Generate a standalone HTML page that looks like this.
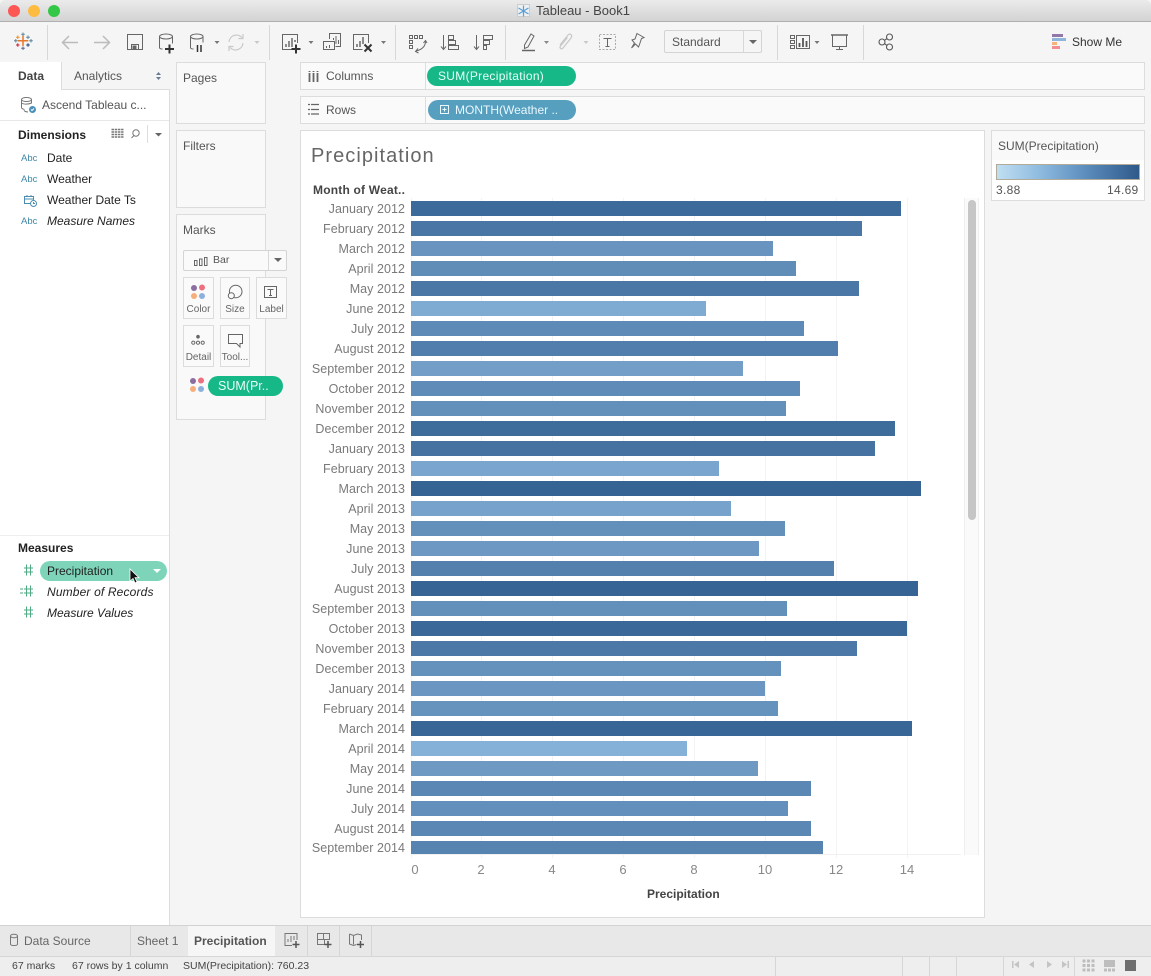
<!DOCTYPE html>
<html><head><meta charset="utf-8"><title>Tableau - Book1</title>
<style>
html,body{margin:0;padding:0;width:1151px;height:976px;overflow:hidden;background:#f5f5f5}
body{position:relative;font-family:"Liberation Sans",sans-serif;font-size:12px;color:#333}
.a,.t,.b,.l{position:absolute}
.t{white-space:nowrap;line-height:16px}
.card{position:absolute;box-sizing:border-box;border:1px solid #dcdcdc;background:#f9f9f9}
.b{left:411px;height:15px}
.l{left:295px;width:110px;text-align:right;color:#7a7a7a;font-size:12.5px;letter-spacing:.05px;line-height:16px;white-space:nowrap}
.g{position:absolute;top:198px;width:1px;height:660px;background:#f3f3f3}
.x{position:absolute;top:862px;width:30px;text-align:center;color:#888;font-size:13px;line-height:16px}
.s{position:absolute;top:957px;width:1px;height:19px;background:#d6d6d6}
.mk{position:absolute;box-sizing:border-box;width:31px;height:42px;border:1px solid #dcdcdc;background:#fafafa;color:#666;font-size:10px;text-align:center;padding-top:26px;line-height:12px;white-space:nowrap}
svg{position:absolute;overflow:visible}
</style></head><body>

<!-- Title bar -->
<div class="a" style="left:0;top:0;width:1151px;height:22px;background:linear-gradient(#ebebeb,#d3d3d3);border-bottom:1px solid #b0b0b0;box-sizing:border-box;border-radius:5px 5px 0 0"></div>
<div class="a" style="left:8px;top:5px;width:12px;height:12px;border-radius:50%;background:#fc5753"></div>
<div class="a" style="left:28px;top:5px;width:12px;height:12px;border-radius:50%;background:#fdbc40"></div>
<div class="a" style="left:48px;top:5px;width:12px;height:12px;border-radius:50%;background:#33c748"></div>
<div class="a" style="left:517px;top:4px;width:13px;height:13px;background:#eef1f4;border:1px solid #ccc;box-sizing:border-box"></div>
<svg style="left:0;top:0" width="1151" height="22"><g stroke="#5a9fd4" stroke-width="1.2"><path d="M523.500 5.500v11M518.500 8l10 6M518.500 14l10-6"/></g></svg>
<div class="t" style="left:536px;top:3px;font-size:13px;color:#444">Tableau - Book1</div>

<!-- Toolbar icons -->
<svg style="left:0;top:0" width="1151" height="62" viewBox="0 0 1151 62" fill="none">
<!-- logo -->
<g stroke-width="1">
<path d="M23 35.500v10.500M17.800 40.800h10.500" stroke="#e8762d" stroke-width="1.500"/>
<path d="M23 32.500v3.500M21.200 34.200h3.600" stroke="#5b879b"/>
<path d="M23 46.500v3.500M21.200 48.200h3.600" stroke="#5b6591"/>
<path d="M15.800 39v3.500M14 40.800h3.600M31 39v3.500M29.200 40.800h3.600" stroke="#5b879b"/>
<path d="M17.800 35.500v3.500M16 37.200h3.600" stroke="#eb912b"/>
<path d="M28 35.500v3.500M26.200 37.200h3.600" stroke="#5b879b"/>
<path d="M17.800 43.200v3.500M16 45h3.600" stroke="#c72035"/>
<path d="M28 43.200v3.500M26.200 45h3.600" stroke="#1f447a"/>
</g>
<!-- separators -->
<g stroke="#d8d8d8"><path d="M47.500 25v35M269.500 25v35M395.500 25v35M505.500 25v35M777.500 25v35M863.500 25v35"/></g>
<!-- back / forward -->
<g stroke="#bcbcbc" stroke-width="1.500"><path d="M78 42.500H63M69 36l-6.500 6.500L69 49M94 42.500h15M103 36l6.500 6.500L103 49"/></g>
<!-- save -->
<g stroke="#666"><path d="M127.500 34.500h15v15h-15zM131.500 49.500v-5h7v5"/><path d="M133 46h3v3.500h-3z" fill="#666"/></g>
<!-- data add -->
<g stroke="#666"><path d="M159.500 36.500v11c0 1 1 1.500 3 1.500M172.500 36.500v7"/><ellipse cx="166" cy="36.500" rx="6.500" ry="2.500"/></g>
<path d="M165 49h9M169.500 44.500v9" stroke="#333" stroke-width="2"/>
<!-- data pause -->
<g stroke="#666"><path d="M190.500 36.500v11c0 1 1 1.500 3 1.500M203 36.500v6"/><ellipse cx="196.800" cy="36.500" rx="6.300" ry="2.500"/></g>
<path d="M197.500 45v7M201 45v7" stroke="#333" stroke-width="1.500"/>
<path d="M214.500 41h5l-2.500 3z" fill="#777"/>
<!-- refresh -->
<g stroke="#c8c8c8" stroke-width="1.200"><path d="M229 42a7.500 7.500 0 0 1 13-4.500M243 43a7.500 7.500 0 0 1-13 4.500"/><path d="M243 34v4.500h-4.500M229 51v-4.500h4.500"/></g>
<path d="M254.500 41h5l-2.500 3z" fill="#c8c8c8"/>
<!-- new sheet -->
<path d="M297.500 43v-8.500h-15v15h9" stroke="#666"/>
<path d="M286 47v-3M289 47v-6M292 47v-9M295 42v-2" stroke="#555" stroke-width="1.300"/>
<path d="M291.500 49h9M296 44.500v9" stroke="#333" stroke-width="2"/>
<path d="M308.500 41h5l-2.500 3z" fill="#777"/>
<!-- duplicate -->
<g stroke="#666"><path d="M329.500 39v-5.500h11v13h-5M323.500 41.500h11v8h-11z"/></g>
<path d="M333.500 40v-2M336 44v-8M338.500 44v-4M326.500 48v-2M329.500 48v-3" stroke="#666"/>
<!-- clear -->
<path d="M368.500 43v-8.500h-15v15h9" stroke="#666"/>
<path d="M357 47v-3M360 47v-6M363 44v-7" stroke="#555" stroke-width="1.300"/>
<path d="M364.500 44.500l7 7M371.500 44.500l-7 7" stroke="#333" stroke-width="2"/>
<path d="M381 41h5l-2.500 3z" fill="#777"/>
<!-- swap -->
<g stroke="#666"><path d="M409.500 35.500h3v3h-3zM414.500 35.500h3v3h-3zM419.500 35.500h3v3h-3zM409.500 40.500h3v3h-3zM409.500 45.500h3v3h-3z"/><path d="M425.500 41c0 5-3 8.500-9.500 10M418 48.500l-2.500 3 3 1.500M423.500 43l2-2.500 1.500 2.500"/></g>
<!-- sort asc/desc -->
<g stroke="#666">
<path d="M443.500 35v14M441 46.500l2.500 3 2.500-3"/><path d="M448.500 35.500h5v4h-5zM448.500 40.500h7v4h-7zM448.500 45.500h10v4h-10z"/>
<path d="M476.500 35v14M474 46.500l2.500 3 2.500-3"/><path d="M483.500 35.500h9v4h-9zM483.500 40.500h6v4h-6zM483.500 45.500h3v4h-3z"/>
</g>
<!-- highlight -->
<path d="M524.500 45l6.500-11 3 2-6 11-3.500 1.500z" stroke="#666"/>
<path d="M522 50.500h13" stroke="#666" stroke-width="1.500"/>
<path d="M544 41h5l-2.500 3z" fill="#888"/>
<!-- clip -->
<path d="M560 45l8-10c2-2 5 0 3 3l-8 10c-1.500 2-4 0-2.500-2l7-8.500" stroke="#c8c8c8" stroke-width="1.200"/>
<path d="M583.500 41h5l-2.500 3z" fill="#c8c8c8"/>
<!-- T -->
<path d="M599.500 34.500h16v15h-16z" stroke="#aaa" stroke-dasharray="2 1.500"/>
<path d="M603.500 38.500h8M607.500 38.500v8M605.500 46.500h4" stroke="#666"/>
<!-- pin -->
<path d="M637 33.500l7 4-2.500 1-2 6-1 2.500-3-3-4 4 3-5-2.500-3 3-1 2-5.500z" stroke="#666"/>
<!-- show cards -->
<g stroke="#666"><path d="M790.500 35.500h4v3h-4zM790.500 40.500h4v3h-4zM790.500 45.500h4v3h-4zM796.500 35.500h13v13h-13z"/></g>
<path d="M799.500 47v-4M803 47v-9M806.500 47v-6" stroke="#555" stroke-width="1.800"/>
<path d="M814.500 41h5l-2.500 3z" fill="#777"/>
<!-- presentation -->
<g stroke="#666"><path d="M831 35h17" stroke-width="1.500"/><path d="M832.500 35v11.500h14V35M839.500 46.500v3M836 49.500h7"/></g>
<!-- share -->
<g stroke="#555" stroke-width="1.100"><circle cx="882" cy="42" r="3"/><circle cx="889.500" cy="37" r="3"/><circle cx="889.500" cy="47" r="3"/><path d="M884.500 40.300l2.500-1.700M884.500 43.700l2.500 1.700"/></g>
<!-- show me -->
<path d="M1052 34h11v3h-11z" fill="#9178a8"/><path d="M1052 38h14v3h-14z" fill="#8fb5dc"/><path d="M1052 42h5v3h-5z" fill="#f6b27a"/><path d="M1052 46h8v3h-8z" fill="#f28e8e"/>
</svg>
<div class="a" style="left:664px;top:30px;width:98px;height:23px;box-sizing:border-box;border:1px solid #d4d4d4;border-radius:2px;background:#f5f5f5"></div>
<div class="a" style="left:743px;top:31px;width:1px;height:21px;background:#d8d8d8"></div>
<div class="t" style="left:672px;top:34px;color:#555">Standard</div>
<div class="a" style="left:749px;top:40px;width:0;height:0;border:4px solid transparent;border-top:4px solid #666;border-bottom:0"></div>
<div class="t" style="left:1072px;top:34px;color:#333">Show Me</div>

<!-- Left panel -->
<div class="a" style="left:0;top:62px;width:169px;height:863px;background:#fff;border-right:1px solid #ddd"></div>
<div class="a" style="left:61px;top:62px;width:109px;height:28px;background:#f5f5f5;border-left:1px solid #ddd;border-bottom:1px solid #ddd;box-sizing:border-box"></div>
<div class="a" style="left:0;top:120px;width:169px;height:1px;background:#e8e8e8"></div>
<div class="t" style="left:18px;top:68px;font-weight:bold;color:#444">Data</div>
<div class="t" style="left:74px;top:68px;color:#555">Analytics</div>
<svg style="left:155px;top:71px" width="8" height="10"><path d="M1 4l2.500-3L6 4zM1 6l2.500 3L6 6z" fill="#6a7a90"/></svg>
<svg style="left:20px;top:97px" width="18" height="18" fill="none" stroke="#777"><ellipse cx="6.500" cy="2.500" rx="5" ry="2"/><path d="M1.500 2.500v8c0 1 1 1.500 3 2M11.500 2.500v4M1.500 6c2 1.500 7 1.500 10 0M4 13.500c1 1 2 1.500 4 1.500"/><circle cx="12.500" cy="12.500" r="3.500" fill="#4a90b8" stroke="none"/><path d="M11 12.500l1 1 2-2" stroke="#fff"/></svg>
<div class="t" style="left:42px;top:97px;color:#555">Ascend Tableau c...</div>

<div class="t" style="left:18px;top:127px;font-weight:bold;color:#222">Dimensions</div>
<svg style="left:111px;top:128px" width="55" height="14" fill="none"><path d="M0.500 1.500h12M.5 4h12M.5 6.500h12M.5 9h12" stroke="#777" stroke-dasharray="2.500 .7" stroke-width="1.500"/><circle cx="25" cy="5" r="3.200" stroke="#777"/><path d="M23 7.500l-2.500 2.500" stroke="#777"/><path d="M36.500 -3v18" stroke="#ddd"/><path d="M44 5h7l-3.500 3.500z" fill="#666"/></svg>

<div class="t" style="left:21px;top:151px;font-size:9.500px;color:#3f87a8">Abc</div>
<div class="t" style="left:47px;top:150px;color:#222">Date</div>
<div class="t" style="left:21px;top:172px;font-size:9.500px;color:#3f87a8">Abc</div>
<div class="t" style="left:47px;top:171px;color:#222">Weather</div>
<svg style="left:24px;top:194px" width="14" height="14" fill="none" stroke="#4a8fb0"><path d="M.5 2.500h9v7h-9zM.5 5h9M3 1v2M7 1v2"/><circle cx="9.500" cy="9.500" r="3" fill="#fff"/><path d="M9.500 8v1.500h1.500"/></svg>
<div class="t" style="left:47px;top:192px;color:#222">Weather Date Ts</div>
<div class="t" style="left:21px;top:214px;font-size:9.500px;color:#3f87a8">Abc</div>
<div class="t" style="left:47px;top:213px;font-style:italic;color:#222">Measure Names</div>

<div class="a" style="left:0;top:535px;width:169px;height:1px;background:#eee"></div>
<div class="t" style="left:18px;top:540px;font-weight:bold;color:#222">Measures</div>
<div class="a" style="left:40px;top:561px;width:127px;height:20px;border-radius:10px;background:#7dd4b8"></div>
<div class="t" style="left:47px;top:563px;color:#222">Precipitation</div>
<div class="a" style="left:153px;top:569px;width:0;height:0;border:4px solid transparent;border-top:4px solid #fff;border-bottom:0"></div>
<svg style="left:20px;top:563px" width="16" height="60" fill="none" stroke="#4fa982"><path d="M6.500 1.500v11M10.500 1.500v11M4 5h9M4 9h9"/><path d="M6.500 22.500v11M10.500 22.500v11M4 26h9M4 30h9M0 26h3M0 30h3"/><path d="M6.500 43.500v11M10.500 43.500v11M4 47h9M4 51h9"/></svg>
<div class="t" style="left:47px;top:584px;font-style:italic;color:#222;letter-spacing:.15px">Number of Records</div>
<div class="t" style="left:47px;top:605px;font-style:italic;color:#222">Measure Values</div>
<svg style="left:129px;top:568px" width="12" height="17"><path d="M1 1v12l3-2.500 2 4.500 2-1-2-4.300h4z" fill="#111" stroke="#fff" stroke-width=".8"/></svg>

<!-- Cards -->
<div class="card" style="left:176px;top:62px;width:90px;height:62px"></div>
<div class="t" style="left:183px;top:70px;color:#555">Pages</div>
<div class="card" style="left:176px;top:130px;width:90px;height:78px"></div>
<div class="t" style="left:183px;top:138px;color:#555">Filters</div>
<div class="card" style="left:176px;top:214px;width:90px;height:206px"></div>
<div class="t" style="left:183px;top:222px;color:#555">Marks</div>
<div class="a" style="left:183px;top:250px;width:104px;height:21px;box-sizing:border-box;border:1px solid #d4d4d4;background:#fafafa;border-radius:2px"></div>
<div class="a" style="left:268px;top:251px;width:1px;height:19px;background:#d8d8d8"></div>
<svg style="left:194px;top:257px" width="14" height="9" fill="none" stroke="#666"><path d="M.5 3.500h2.500v5H.5zM5.500 2h2.500v6.500H5.500zM10.500 .5h2.500v8h-2.500z"/></svg>
<div class="t" style="left:213px;top:252px;font-size:10.500px;color:#555">Bar</div>
<div class="a" style="left:274px;top:258px;width:0;height:0;border:4px solid transparent;border-top:4px solid #666;border-bottom:0"></div>

<div class="mk" style="left:183px;top:277px">Color</div>
<div class="mk" style="left:220px;top:277px;width:30px">Size</div>
<div class="mk" style="left:256px;top:277px">Label</div>
<div class="mk" style="left:183px;top:325px">Detail</div>
<div class="mk" style="left:220px;top:325px;width:30px">Tool...</div>
<svg style="left:183px;top:277px" width="100" height="120" fill="none">
<circle cx="11" cy="11" r="3" fill="#8a6fa0"/><circle cx="19" cy="10.500" r="3" fill="#ee7080"/><circle cx="11" cy="19" r="3" fill="#f5ae7c"/><circle cx="19" cy="19" r="3" fill="#8cb0dc"/>
<circle cx="52.700" cy="14.500" r="6.300" stroke="#666"/><circle cx="48.300" cy="18.700" r="3" stroke="#666" fill="#fafafa"/>
<path d="M81.500 9.500h12v11h-12z" stroke="#666"/><path d="M84.500 12.500h6M87.500 12.500v6M86 18.500h3" stroke="#666"/>
<circle cx="15" cy="59.700" r="1.800" fill="#666"/><circle cx="10.300" cy="65.700" r="1.600" stroke="#666"/><circle cx="15" cy="65.700" r="1.600" stroke="#666"/><circle cx="19.700" cy="65.700" r="1.600" stroke="#666"/>
<path d="M45.500 57.500h14v9h-2.500v3.500l-3.500-3.500h-8z" stroke="#666"/>
</svg>
<svg style="left:189px;top:377px" width="16" height="16"><circle cx="4" cy="4" r="3" fill="#8a6fa0"/><circle cx="12" cy="3.500" r="3" fill="#ee7080"/><circle cx="4" cy="12" r="3" fill="#f5ae7c"/><circle cx="12" cy="12" r="3" fill="#8cb0dc"/></svg>
<div class="a" style="left:208px;top:376px;width:75px;height:20px;border-radius:10px;background:#17b887"></div>
<div class="t" style="left:218px;top:378px;color:#e9fff8;font-size:12.500px">SUM(Pr..</div>

<!-- Shelves -->
<div class="card" style="left:300px;top:62px;width:845px;height:28px;background:#fafafa"></div>
<div class="card" style="left:300px;top:96px;width:845px;height:28px;background:#fafafa"></div>
<div class="a" style="left:425px;top:63px;width:1px;height:26px;background:#ddd"></div>
<div class="a" style="left:425px;top:97px;width:1px;height:26px;background:#ddd"></div>
<svg style="left:308px;top:70px" width="12" height="46"><path d="M1.500 3v9M5.500 3v9M9.500 3v9" stroke="#666" stroke-width="1.800"/><path d="M1.500 1v1M5.500 1v1M9.500 1v1" stroke="#666" stroke-width="1.800"/><path d="M0 34.500h2M3 34.500h8M0 39.500h2M3 39.500h8M0 44h2M3 44h8" stroke="#666" stroke-width="1.300"/></svg>
<div class="t" style="left:326px;top:68px;color:#555">Columns</div>
<div class="t" style="left:326px;top:102px;color:#555">Rows</div>
<div class="a" style="left:427px;top:66px;width:149px;height:20px;border-radius:10px;background:#17b887"></div>
<div class="t" style="left:438px;top:68px;color:#e9fff8;letter-spacing:.3px">SUM(Precipitation)</div>
<div class="a" style="left:428px;top:100px;width:148px;height:20px;border-radius:10px;background:#569fbe"></div>
<svg style="left:440px;top:105px" width="10" height="10" fill="none" stroke="#e9f8ff"><path d="M.5.500h8v8h-8zM2.500 4.500h4M4.500 2.500v4"/></svg>
<div class="t" style="left:455px;top:102px;color:#e9f8ff">MONTH(Weather ..</div>

<!-- Chart card -->
<div class="card" style="left:300px;top:130px;width:685px;height:788px;background:#fff"></div>
<div class="t" style="left:311px;top:144px;font-size:20px;line-height:24px;color:#666;letter-spacing:1.05px">Precipitation</div>
<div class="t" style="left:313px;top:182px;font-weight:bold;color:#444;letter-spacing:.2px">Month of Weat..</div>

<div class="g" style="left:411px"></div><div class="g" style="left:481px"></div><div class="g" style="left:552px"></div><div class="g" style="left:623px"></div><div class="g" style="left:694px"></div><div class="g" style="left:765px"></div><div class="g" style="left:836px"></div><div class="g" style="left:907px"></div>
<div class="a" style="left:411px;top:854px;width:550px;height:1px;background:#f0f0f0"></div>
<div class="a" style="left:964px;top:198px;width:15px;height:657px;background:#fafafa;border-left:1px solid #eee;border-right:1px solid #eee;box-sizing:border-box"></div>
<div class="a" style="left:968px;top:200px;width:8px;height:320px;border-radius:4px;background:#c6c6c6"></div>

<div class="b" style="top:201px;width:490px;background:#3c6a9a"></div><div class="l" style="top:201px">January 2012</div>
<div class="b" style="top:221px;width:451px;background:#4976a5"></div><div class="l" style="top:221px">February 2012</div>
<div class="b" style="top:241px;width:362px;background:#6894bf"></div><div class="l" style="top:241px">March 2012</div>
<div class="b" style="top:261px;width:385px;background:#608cb8"></div><div class="l" style="top:261px">April 2012</div>
<div class="b" style="top:281px;width:448px;background:#4a77a6"></div><div class="l" style="top:281px">May 2012</div>
<div class="b" style="top:301px;width:295px;background:#7faad2"></div><div class="l" style="top:301px">June 2012</div>
<div class="b" style="top:321px;width:393px;background:#5d8ab6"></div><div class="l" style="top:321px">July 2012</div>
<div class="b" style="top:341px;width:427px;background:#517eac"></div><div class="l" style="top:341px">August 2012</div>
<div class="b" style="top:361px;width:332px;background:#729ec8"></div><div class="l" style="top:361px">September 2012</div>
<div class="b" style="top:381px;width:389px;background:#5e8bb7"></div><div class="l" style="top:381px">October 2012</div>
<div class="b" style="top:401px;width:375px;background:#638fbb"></div><div class="l" style="top:401px">November 2012</div>
<div class="b" style="top:421px;width:484px;background:#3e6c9b"></div><div class="l" style="top:421px">December 2012</div>
<div class="b" style="top:441px;width:464px;background:#4572a1"></div><div class="l" style="top:441px">January 2013</div>
<div class="b" style="top:461px;width:308px;background:#7aa5cf"></div><div class="l" style="top:461px">February 2013</div>
<div class="b" style="top:481px;width:510px;background:#356394"></div><div class="l" style="top:481px">March 2013</div>
<div class="b" style="top:501px;width:320px;background:#76a2cb"></div><div class="l" style="top:501px">April 2013</div>
<div class="b" style="top:521px;width:374px;background:#6390bb"></div><div class="l" style="top:521px">May 2013</div>
<div class="b" style="top:541px;width:348px;background:#6c98c3"></div><div class="l" style="top:541px">June 2013</div>
<div class="b" style="top:561px;width:423px;background:#5380ad"></div><div class="l" style="top:561px">July 2013</div>
<div class="b" style="top:581px;width:507px;background:#366495"></div><div class="l" style="top:581px">August 2013</div>
<div class="b" style="top:601px;width:376px;background:#638fbb"></div><div class="l" style="top:601px">September 2013</div>
<div class="b" style="top:621px;width:496px;background:#3a6898"></div><div class="l" style="top:621px">October 2013</div>
<div class="b" style="top:641px;width:446px;background:#4b78a7"></div><div class="l" style="top:641px">November 2013</div>
<div class="b" style="top:661px;width:370px;background:#6591bd"></div><div class="l" style="top:661px">December 2013</div>
<div class="b" style="top:681px;width:354px;background:#6a96c1"></div><div class="l" style="top:681px">January 2014</div>
<div class="b" style="top:701px;width:367px;background:#6692be"></div><div class="l" style="top:701px">February 2014</div>
<div class="b" style="top:721px;width:501px;background:#386697"></div><div class="l" style="top:721px">March 2014</div>
<div class="b" style="top:741px;width:276px;background:#85b0d8"></div><div class="l" style="top:741px">April 2014</div>
<div class="b" style="top:761px;width:347px;background:#6d99c3"></div><div class="l" style="top:761px">May 2014</div>
<div class="b" style="top:781px;width:400px;background:#5b87b4"></div><div class="l" style="top:781px">June 2014</div>
<div class="b" style="top:801px;width:377px;background:#628fbb"></div><div class="l" style="top:801px">July 2014</div>
<div class="b" style="top:821px;width:400px;background:#5b87b4"></div><div class="l" style="top:821px">August 2014</div>
<div class="b" style="top:841px;width:412px;height:13px;background:#5783b0"></div><div class="l" style="top:840px">September 2014</div>

<div class="x" style="left:400px">0</div><div class="x" style="left:466px">2</div><div class="x" style="left:537px">4</div><div class="x" style="left:608px">6</div><div class="x" style="left:679px">8</div><div class="x" style="left:750px">10</div><div class="x" style="left:821px">12</div><div class="x" style="left:892px">14</div>
<div class="t" style="left:647px;top:886px;font-weight:bold;color:#444">Precipitation</div>

<!-- Legend -->
<div class="card" style="left:991px;top:130px;width:154px;height:71px;background:#fff"></div>
<div class="a" style="left:992px;top:131px;width:152px;height:29px;background:#f9f9f9"></div>
<div class="t" style="left:998px;top:138px;color:#555">SUM(Precipitation)</div>
<div class="a" style="left:996px;top:164px;width:144px;height:16px;box-sizing:border-box;border:1px solid #b2ab98;background:linear-gradient(90deg,#c0dff2,#8fbbdf 30%,#5f90c0 60%,#2f5a8a)"></div>
<div class="t" style="left:996px;top:182px;color:#555;letter-spacing:.3px">3.88</div>
<div class="t" style="left:1107px;top:182px;color:#555;letter-spacing:.3px">14.69</div>

<!-- Tabs -->
<div class="a" style="left:0;top:925px;width:1151px;height:32px;background:#e8e8e8;border-top:1px solid #d2d2d2;border-bottom:1px solid #d6d6d6;box-sizing:border-box"></div>
<div class="a" style="left:130px;top:926px;width:1px;height:30px;background:#d6d6d6"></div>
<div class="a" style="left:188px;top:926px;width:87px;height:30px;background:#f6f6f6"></div>
<div class="a" style="left:307px;top:926px;width:1px;height:30px;background:#d6d6d6"></div>
<div class="a" style="left:339px;top:926px;width:1px;height:30px;background:#d6d6d6"></div>
<div class="a" style="left:371px;top:926px;width:1px;height:30px;background:#d6d6d6"></div>
<svg style="left:0;top:926px" width="380" height="30" fill="none">
<path d="M10.500 10v8c0 1 1.500 1.500 3.500 1.500s3.500-.5 3.500-1.500v-8" stroke="#777"/><ellipse cx="14" cy="10" rx="3.500" ry="1.800" stroke="#777"/>
<path d="M297 14V7.500h-12v12h7" stroke="#777"/><path d="M288 16v-3M291 16v-6M294 14v-4" stroke="#777"/><path d="M292.500 18.500h7M296 15v7" stroke="#555" stroke-width="1.500"/>
<path d="M317.500 7.500h12v6h-5v5h-7zM317.500 13.500h7M323.500 7.500v6" stroke="#777"/><path d="M324.500 18.500h7M328 15v7" stroke="#555" stroke-width="1.500"/>
<path d="M349.500 8l4 1.500 4-1.500 4 1v5M349.500 8v10l4 1.500 3-1M353.500 9.500v9" stroke="#777"/><path d="M357 18.500h7M360.500 15v7" stroke="#555" stroke-width="1.500"/>
</svg>
<div class="t" style="left:24px;top:933px;color:#666">Data Source</div>
<div class="t" style="left:137px;top:933px;color:#666">Sheet 1</div>
<div class="t" style="left:194px;top:933px;color:#555;font-weight:bold">Precipitation</div>

<!-- Status -->
<div class="a" style="left:0;top:957px;width:1151px;height:19px;background:#eee"></div>
<div class="t" style="left:12px;top:958px;font-size:10.500px;color:#444">67 marks</div>
<div class="t" style="left:72px;top:958px;font-size:10.500px;color:#444">67 rows by 1 column</div>
<div class="t" style="left:183px;top:958px;font-size:10.500px;color:#444">SUM(Precipitation): 760.23</div>
<div class="s" style="left:775px"></div><div class="s" style="left:902px"></div><div class="s" style="left:929px"></div><div class="s" style="left:956px"></div><div class="s" style="left:1003px"></div><div class="s" style="left:1074px"></div>
<svg style="left:1010px;top:958px" width="141" height="18">
<g fill="#c4c4c4"><path d="M2 3h1.500v7H2zM9 3v7L4 6.500zM24 3v7l-5-3.500zM37 3v7l5-3.500zM52 3v7l5-3.500zM57.500 3H59v7h-1.500z"/></g>
<g fill="#bdbdbd"><path d="M73 2h3v3h-3zM77.500 2h3v3h-3zM82 2h3v3h-3zM73 6.500h3v3h-3zM77.500 6.500h3v3h-3zM82 6.500h3v3h-3zM73 11h3v3h-3zM77.500 11h3v3h-3zM82 11h3v3h-3z" transform="translate(-.5 -.5)"/><path d="M94 2h11v7H94zM94 10.500h3v3h-3zM98 10.500h3v3h-3zM102 10.500h3v3h-3z"/></g>
<path d="M115 2h11v11h-11z" fill="#6e6e6e"/>
</svg>
</body></html>
